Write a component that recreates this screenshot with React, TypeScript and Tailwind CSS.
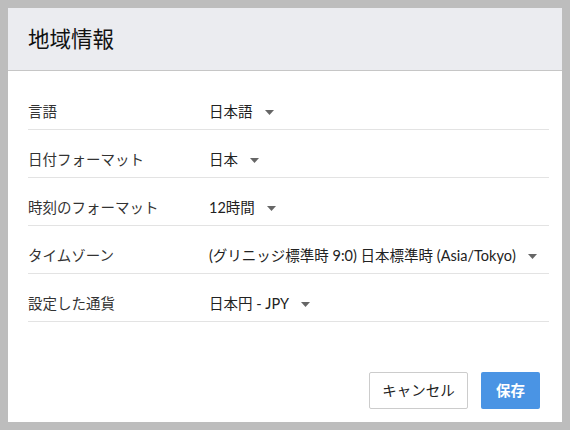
import { useState } from "react";

interface Field {
  label: string;
  value: string;
}

const fields: Field[] = [
  { label: "言語", value: "日本語" },
  { label: "日付フォーマット", value: "日本" },
  { label: "時刻のフォーマット", value: "12時間" },
  { label: "タイムゾーン", value: "(グリニッジ標準時 9:0) 日本標準時 (Asia/Tokyo)" },
  { label: "設定した通貨", value: "日本円 - JPY" },
];

function Caret() {
  return (
    <svg width="9" height="5" viewBox="0 0 9 5" className="ml-[12px] shrink-0">
      <path d="M0 0h9L4.5 5z" fill="#666" />
    </svg>
  );
}

export default function App() {
  const [values] = useState(fields);

  return (
    <div
      className="w-[570px] h-[430px] bg-[#bdbdbd] p-[8px]"
      style={{ fontFamily: '"Lato", "Noto Sans CJK JP", sans-serif' }}
    >
      <div className="w-[554px] h-[414px] bg-white flex flex-col">
        <header className="h-[63px] shrink-0 bg-[#ebecf0] border-b border-[#c6c6c6] flex items-center px-[20px]">
          <h1 className="text-[21.5px] text-[#111]">地域情報</h1>
        </header>

        <main className="flex-1 pt-[11px] pl-[20px] pr-[13px]">
          {values.map((f) => (
            <div
              key={f.label}
              className="flex items-center h-[48px] pt-[13px] border-b border-[#e3e3e3]"
            >
              <div className="w-[181px] text-[14.5px] text-[#333]">{f.label}</div>
              <div className="flex items-center text-[14.5px] text-[#222]">
                <span>{f.value}</span>
                <Caret />
              </div>
            </div>
          ))}
        </main>

        <footer className="flex justify-end gap-[13px] pr-[22px] pb-[13px]">
          <button className="w-[99px] h-[37px] border border-[#cccccc] rounded-[2px] bg-white text-[14.5px] text-[#222]">
            キャンセル
          </button>
          <button className="w-[59px] h-[37px] rounded-[2px] bg-[#4a94e4] text-[14.5px] font-bold text-white">
            保存
          </button>
        </footer>
      </div>
    </div>
  );
}
